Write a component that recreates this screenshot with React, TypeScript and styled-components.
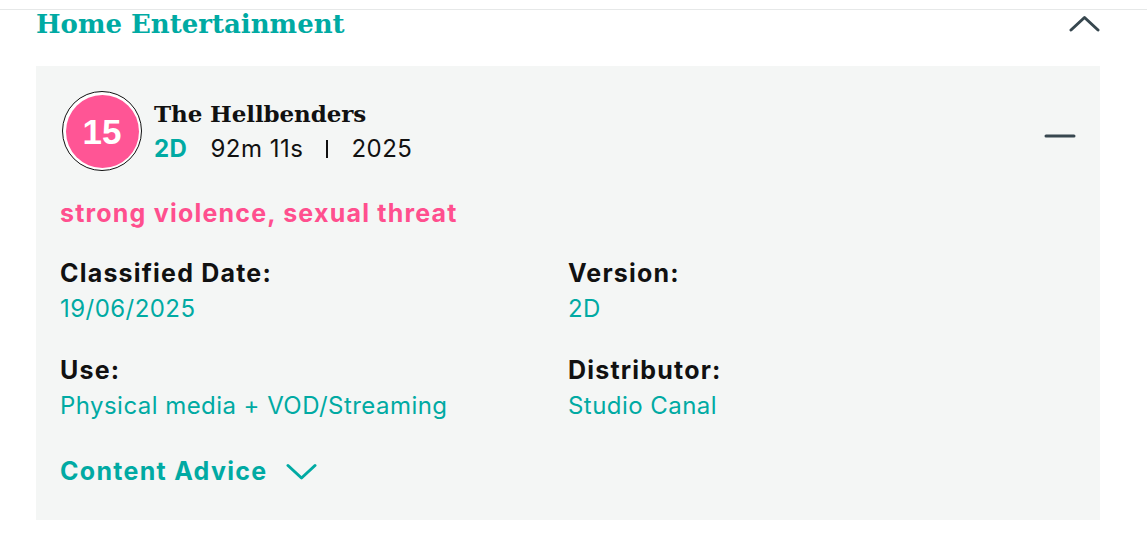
import React from 'react'
import styled, { createGlobalStyle } from 'styled-components'

const teal = '#00aaa3';
const pink = '#ff4f8e';
const slate = '#37474f';
const sans = `Inter, "Open Sans", Arial, sans-serif`;
const slab = `"DejaVu Serif", "Liberation Serif", serif`;

const GlobalStyle = createGlobalStyle`
  body {
    margin: 0;
    background: #fff;
    font-family: ${sans};
  }
`

const Page = styled.div`
  width: 1147px;
  height: 559px;
  border-top: 1px solid #e6e8e8;
  margin-top: 9px;
  box-sizing: border-box;
  padding: 0 47px 0 36px;
`

const SectionHead = styled.div`
  display: flex;
  justify-content: space-between;
  align-items: center;
  height: 27px;
  margin-bottom: 29px;
`

const SectionTitle = styled.h2`
  margin: 0;
  font-family: ${slab};
  font-weight: 700;
  font-size: 26px;
  color: ${teal};
`

const Card = styled.div`
  background: #f4f6f5;
  padding: 24px 24px 34px 24px;
  display: flex;
  flex-direction: column;
`

const FilmRow = styled.div`
  display: flex;
  align-items: center;
  gap: 12px;
`

const Badge = styled.div`
  width: 80px;
  height: 80px;
  margin: 1px 0 1px 2px;
  border-radius: 50%;
  border: 1.5px solid #111;
  box-sizing: border-box;
  display: flex;
  align-items: center;
  justify-content: center;
  background: #fff;
`

const BadgeInner = styled.div`
  width: 73px;
  height: 73px;
  border-radius: 50%;
  background: #ff5595;
  color: #fff;
  font-family: "Liberation Sans", Arial, sans-serif;
  font-size: 35px;
  font-weight: 700;
  padding-top: 2px;
  box-sizing: border-box;
  display: flex;
  align-items: center;
  justify-content: center;
`

const FilmInfo = styled.div`
  flex: 1;
  display: flex;
  flex-direction: column;
  gap: 7px;
`

const FilmTitle = styled.div`
  font-family: ${slab};
  font-weight: 700;
  font-size: 23px;
  letter-spacing: -0.1px;
  color: #111;
`

const Meta = styled.div`
  display: flex;
  align-items: center;
  font-size: 24px;
  letter-spacing: 0.5px;
  color: #111;
  gap: 23px;
`

const Tag = styled.span`
  color: ${teal};
  font-weight: 700;
`

const Divider = styled.span`
  display: inline-block;
  width: 2px;
  height: 18px;
  margin-top: 2px;
  background: #111;
`

const MinusWrap = styled.div`
  align-self: center;
  margin-top: 10px;
  display: flex;
`

const Advice = styled.div`
  margin-top: 26px;
  font-size: 25px;
  font-weight: 700;
  letter-spacing: 1.2px;
  color: ${pink};
`

const Grid = styled.div`
  display: grid;
  grid-template-columns: 508px 1fr;
  row-gap: 32px;
  margin-top: 30px;
`

const Field = styled.div`
  display: flex;
  flex-direction: column;
  gap: 6px;
`

const Label = styled.div`
  font-size: 25px;
  font-weight: 700;
  letter-spacing: 1.2px;
  color: #111;
`

const Value = styled.div`
  font-size: 24px;
  letter-spacing: 0.45px;
  color: ${teal};
`

const Toggle = styled.div`
  margin-top: 36px;
  display: flex;
  align-items: center;
  gap: 18px;
  font-size: 25px;
  font-weight: 700;
  letter-spacing: 1.3px;
  color: ${teal};
`

function Chevron({ up, color }: { up?: boolean; color: string }) {
  return (
    <svg width="31" height="17" viewBox="0 0 31 17">
      <path
        d={up ? 'M2 15 L15.5 2.5 L29 15' : 'M2 2.5 L15.5 15 L29 2.5'}
        fill="none"
        stroke={color}
        strokeWidth="3"
        strokeLinecap="round"
        strokeLinejoin="round"
      />
    </svg>
  )
}

const Minus = () => (
  <MinusWrap>
    <svg width="32" height="6" viewBox="0 0 32 6">
      <path d="M2 3 H30" stroke={slate} strokeWidth="3" strokeLinecap="round" />
    </svg>
  </MinusWrap>
)

const fields = [
  { label: 'Classified Date:', value: '19/06/2025' },
  { label: 'Version:', value: '2D' },
  { label: 'Use:', value: 'Physical media + VOD/Streaming' },
  { label: 'Distributor:', value: 'Studio Canal' },
]

export default function App() {
  return (
    <>
      <GlobalStyle />
      <Page>
        <SectionHead>
          <SectionTitle>Home Entertainment</SectionTitle>
          <Chevron up color={slate} />
        </SectionHead>
        <Card>
          <FilmRow>
            <Badge>
              <BadgeInner>15</BadgeInner>
            </Badge>
            <FilmInfo>
              <FilmTitle>The Hellbenders</FilmTitle>
              <Meta>
                <Tag>2D</Tag>
                <span>92m 11s</span>
                <Divider />
                <span>2025</span>
              </Meta>
            </FilmInfo>
            <Minus />
          </FilmRow>
          <Advice>strong violence, sexual threat</Advice>
          <Grid>
            {fields.map((f) => (
              <Field key={f.label}>
                <Label>{f.label}</Label>
                <Value>{f.value}</Value>
              </Field>
            ))}
          </Grid>
          <Toggle>
            Content Advice
            <Chevron color={teal} />
          </Toggle>
        </Card>
      </Page>
    </>
  )
}
